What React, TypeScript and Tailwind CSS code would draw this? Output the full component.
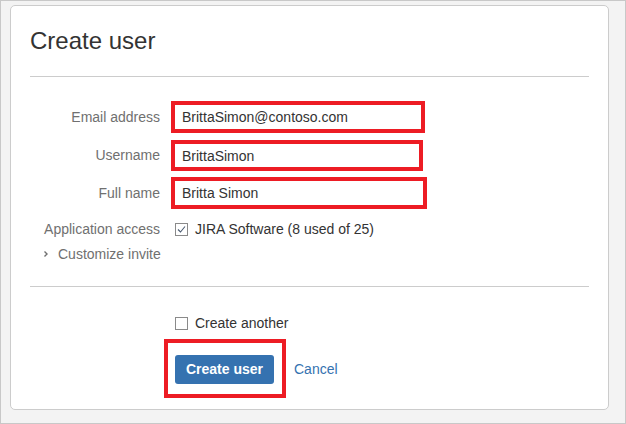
import { useState } from "react";

const Field = ({ label, value, width, height, mt }: { label: string; value: string; width: string; height: string; mt: string }) => (
  <div className={`flex items-center ${mt}`}>
    <label className="w-[130px] text-right text-[14px] text-[#707070]">{label}</label>
    <div className={`ml-[11px] border-4 border-[#ed1c24] ${width} ${height} flex items-center bg-white`}>
      <input
        className="w-full h-full pl-[7px] text-[14px] text-[#333] outline-none bg-white"
        defaultValue={value}
      />
    </div>
  </div>
);

const App = () => {
  const [jira, setJira] = useState(true);
  const [another, setAnother] = useState(false);

  return (
    <div className="w-[626px] h-[424px] border border-[#c8c8c8] bg-[#f3f3f3] pt-[4px] pl-[9px] font-['Liberation_Sans',Arial,sans-serif]">
      <div className="w-[599px] h-[405px] border border-[#cccccc] rounded-[5px] bg-white px-[19px]">
        <h1 className="pt-[21px] text-[24px] leading-[28px] text-[#333]">Create user</h1>
        <div className="mt-[21px] border-t border-[#cccccc]" />

        <form className="flex flex-col">
          <Field label="Email address" value="BrittaSimon@contoso.com" width="w-[254px]" height="h-[32px]" mt="mt-[24px]" />
          <Field label="Username" value="BrittaSimon" width="w-[252px]" height="h-[31px]" mt="mt-[7px]" />
          <Field label="Full name" value="Britta Simon" width="w-[256px]" height="h-[32px]" mt="mt-[6px]" />

          <div className="flex items-center mt-[11px] h-[18px]">
            <span className="w-[130px] text-right text-[14px] text-[#707070]">Application access</span>
            <label className="ml-[15px] flex items-center gap-[7px] text-[14px] text-[#333] cursor-pointer">
              <span
                onClick={() => setJira(!jira)}
                className="w-[13px] h-[13px] border border-[#8a8a8a] bg-white flex items-center justify-center"
              >
                {jira && (
                  <svg width="11" height="11" viewBox="0 0 11 11">
                    <path d="M2 5.5 L4.5 8 L9 2.5" fill="none" stroke="#4a5a70" strokeWidth="1.1" />
                  </svg>
                )}
              </span>
              JIRA Software (8 used of 25)
            </label>
          </div>

          <div className="flex items-center mt-[7px] h-[18px] pl-[13px] text-[14px] text-[#707070]">
            <svg width="6" height="8" viewBox="0 0 6 8" className="mr-[9px]">
              <path d="M1.5 1.5 L4 4 L1.5 6.5" fill="none" stroke="#707070" strokeWidth="1.4" />
            </svg>
            Customize invite
          </div>

          <div className="mt-[23px] border-t border-[#cccccc]" />

          <label className="ml-[145px] mt-[27px] flex items-center gap-[7px] h-[18px] text-[14px] text-[#333] cursor-pointer">
            <span
              onClick={() => setAnother(!another)}
              className="w-[13px] h-[13px] border border-[#8a8a8a] bg-white flex items-center justify-center"
            >
              {another && (
                <svg width="11" height="11" viewBox="0 0 11 11">
                  <path d="M2 5.5 L4.5 8 L9 2.5" fill="none" stroke="#4a5a70" strokeWidth="1.1" />
                </svg>
              )}
            </span>
            Create another
          </label>

          <div className="flex items-center mt-[7px]">
            <div className="ml-[134px] w-[122px] h-[59px] border-4 border-[#ed1c24] pl-[7px] pt-[12px]">
              <button
                type="button"
                className="w-[99px] h-[29px] rounded-[3px] bg-[#3572b0] text-white text-[14px] font-bold"
              >
                Create user
              </button>
            </div>
            <a href="#" className="ml-[8px] mt-[1px] text-[14px] text-[#3572b0]">Cancel</a>
          </div>
        </form>
      </div>
    </div>
  );
};

export default App;
